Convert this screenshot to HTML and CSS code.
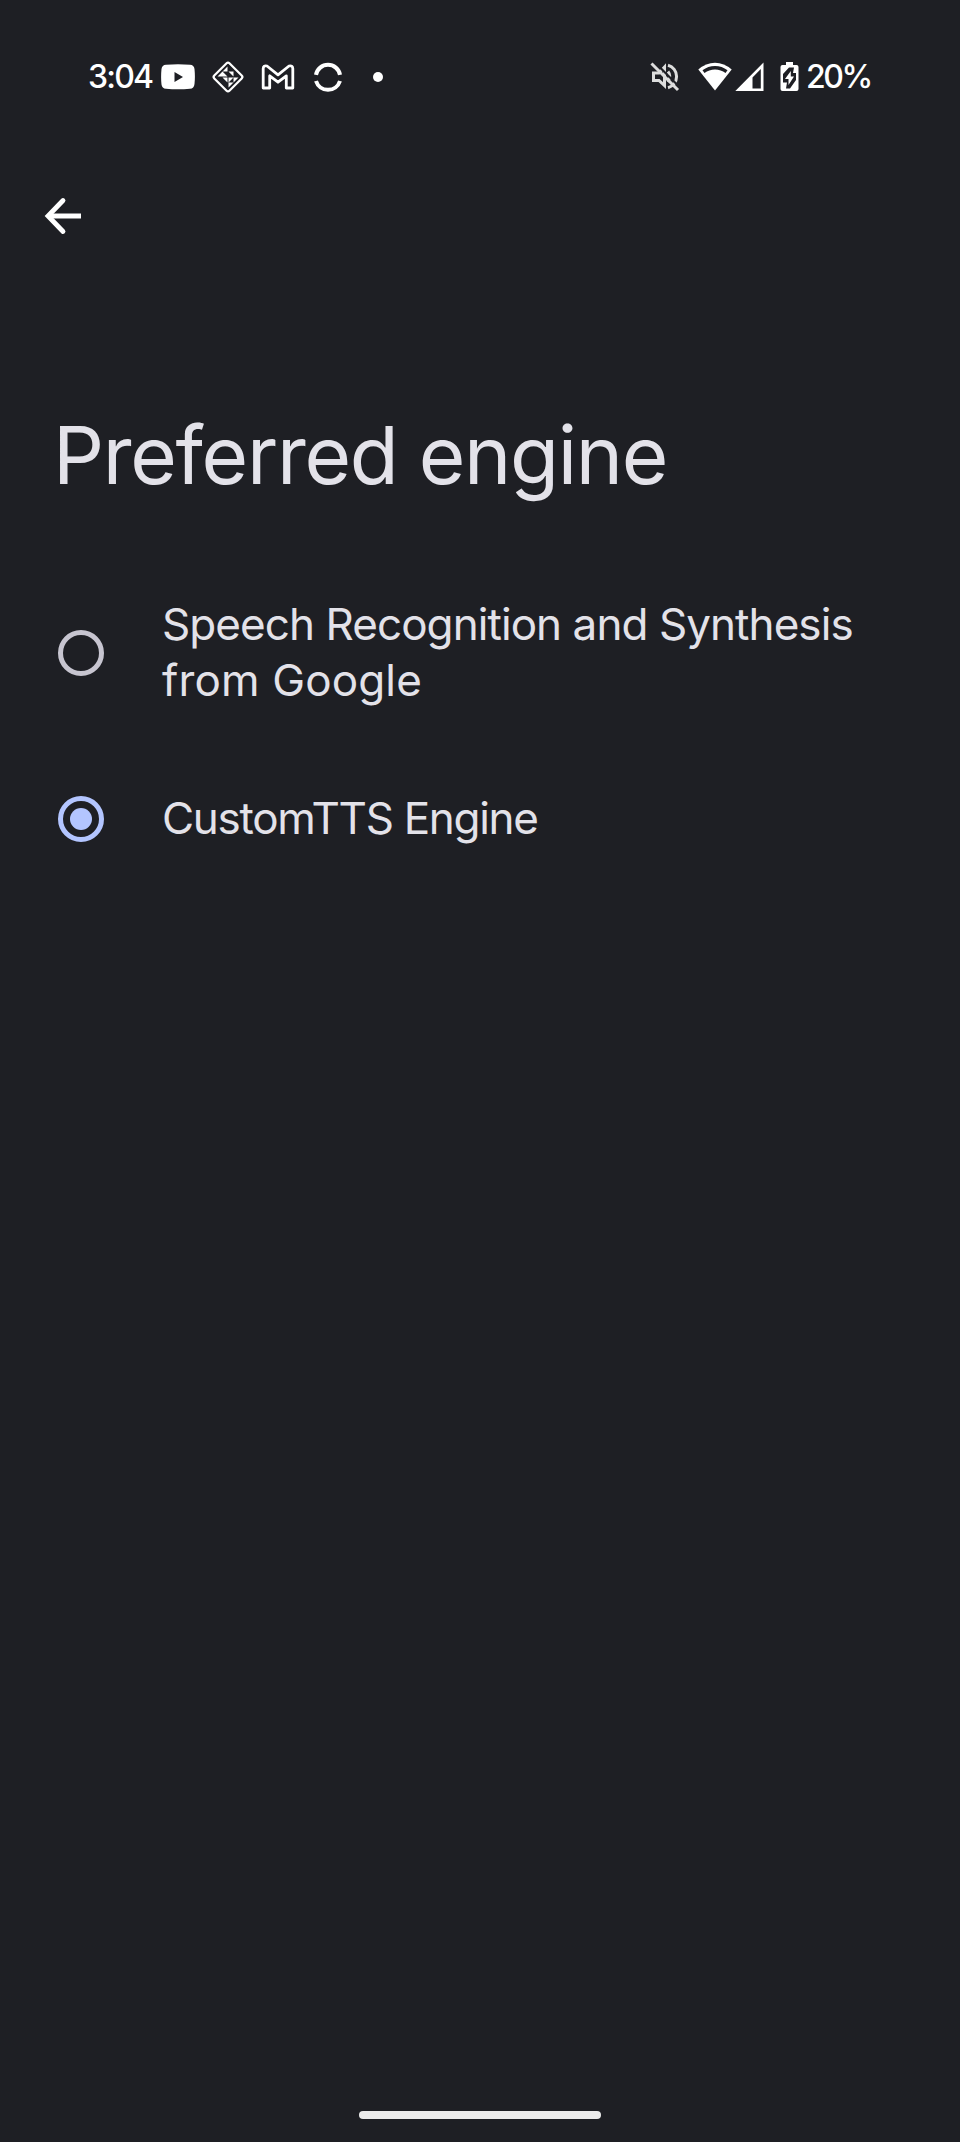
FILE: index.html
```html
<!DOCTYPE html>
<html lang="en">
<head>
<meta charset="utf-8">
<title>Preferred engine</title>
<link rel="stylesheet" href="styles.css">
</head>
<body>
<div class="screen">
  <header class="status">
    <div class="status-left">
      <span class="clock">3:04</span>
      <svg class="icon youtube" width="34" height="26" viewBox="0 0 34 26"><path fill="#fff" fill-rule="evenodd" d="M5 .8Q17-.2 29 .8Q33 1 33.500 5Q34.300 13 33.500 20Q33 24.500 29 24.800Q17 25.800 5 24.800Q1 24.500.5 20.500Q-.3 13 .5 5Q1 1 5 .8ZM13.500 8V18L22 13Z"/></svg>
      <svg class="icon diamond" width="34" height="34" viewBox="-17 -17 34 34"><rect x="-10.700" y="-10.700" width="21.400" height="21.400" rx="2" transform="rotate(45)" fill="none" stroke="#fff" stroke-width="2.200"/><path fill="#fff" d="M-.5-10.500V-5.500H-5.500ZM.5-5.500H5.500V-.5ZM-5.500-5.500V-.5H-.5ZM5.500.5H10.500L5.500 5.500ZM-10.500-.5H-5.500V-5.500ZM-5.500.5H-.5V5.500ZM.5.5H5.500L.5 5.500ZM.5 10.500V5.500H5.500Z"/></svg>
      <svg class="icon gmail" width="34" height="26" viewBox="0 0 34 26"><path fill="none" stroke="#fff" stroke-width="2.800" stroke-linejoin="round" d="M2.200 24V4.500Q2.500 1 6 2L17 10.800L28 2Q31.500 1 31.800 4.500V24H25.300V11.800L17 18.200L8.700 11.800V24Z"/></svg>
      <svg class="icon ring" width="30" height="30" viewBox="-15 -15 30 30"><path fill="none" stroke="#fff" stroke-width="4" d="M-12-2.200A12.200 12.200 0 0 1 12-2.200M-12 4A12.600 12.600 0 0 0 12 4"/></svg>
      <span class="dot"></span>
    </div>
    <div class="status-right">
      <svg class="icon mute" width="30" height="30" viewBox="0 0 30 30"><g fill="none" stroke="#ddd" stroke-width="3"><path d="M3.500 11H9L14.500 5V23.500L9 18.500H3.500Z"/><path d="M18 9.500Q21.500 14 18 20M18 3.300A11.600 11.600 0 0 1 18 25.700"/></g><path stroke="#1e1f24" stroke-width="2.200" d="M4-.5L30 25.500"/><path stroke="#ddd" stroke-width="3" d="M1.500 1.500L28 28"/></svg>
      <svg class="icon wifi" width="34" height="30" viewBox="0 0 34 30"><path fill="#fff" d="M17 .7Q26 .7 33.700 7.500L17 28.500L.3 7.500Q8 .7 17 .7Z"/><path fill="#1e1f24" d="M17 4Q24 4 29.500 8.300L27.500 11Q23 7.500 17 7.500T6.500 11L4.500 8.300Q10 4 17 4Z"/></svg>
      <svg class="icon signal" width="29" height="30" viewBox="0 0 29 30"><path fill="#fff" fill-rule="evenodd" d="M28.500.5V29H.3ZM25.800 7V26.500H17.500V15.500Z"/></svg>
      <svg class="icon battery" width="19" height="30" viewBox="0 0 19 30"><path fill="#fff" d="M6 0H13V3H16.500Q18.500 3 18.500 5V27Q18.500 29 16.500 29H2.500Q.5 29 .5 27V5Q.5 3 2.500 3H6Z"/><path fill="#1e1f24" d="M3 12L9 5.500H14L13 11H16V18L10 26.500H6L7 20.500H3Z"/><path fill="#fff" d="M10.800 9L5 17H8.500V23L14 14.500H10.800Z"/></svg>
      <span class="percent">20%</span>
    </div>
  </header>
  <nav class="toolbar">
    <svg width="40" height="40" viewBox="0 0 40 40"><path fill="none" stroke="#fff" stroke-width="5" d="M38 20H6"/><path fill="none" stroke="#fff" stroke-width="4.800" stroke-linecap="round" d="M20 4.500L5 20L20 35.500"/></svg>
  </nav>
  <h1 class="title">Preferred engine</h1>
  <main class="options">
    <label class="option"><span class="radio"></span><span class="label"><span class="long">Speech Recognition and Synthesis</span><br><span class="short">from Google</span></span></label>
    <label class="option"><span class="radio selected"></span><span class="label custom">CustomTTS Engine</span></label>
  </main>
  <footer class="nav-area"><span class="handle"></span></footer>
</div>
</body>
</html>
```
FILE: styles.css
```css
* { box-sizing: border-box; }
body { margin: 0; background: #1e1f24; }
.screen { width: 960px; height: 2142px; display: flex; flex-direction: column; font-family: Inter, "Open Sans", sans-serif; color: #e3e2e9; }
.status { height: 154px; display: flex; align-items: center; justify-content: space-between; padding: 0 90px 0 88px; color: #fff; }
.status-left, .status-right { display: flex; align-items: center; }
.clock, .percent { font-size: 32px; line-height: 40px; font-weight: 500; white-space: nowrap; }
.clock { width: 73px; letter-spacing: -1.8px; }
.percent { width: 64px; letter-spacing: -2.4px; margin-left: 7px; }
.icon { display: block; flex: none; }
.diamond { margin-left: 16px; }
.gmail { margin-left: 16px; }
.ring { margin-left: 18px; }
.dot { width: 10px; height: 10px; margin-left: 30px; border-radius: 50%; background: #fff; }
.wifi { margin-left: 18px; }
.signal { margin-left: 3px; }
.battery { margin-left: 16px; }
.toolbar { height: 124px; padding: 42px 0 0 43px; }
.title { margin: 0; padding: 127px 0 0 53px; height: 301px; font-size: 80px; line-height: 100px; font-weight: 400; letter-spacing: -1.3px; white-space: nowrap; }
.options { display: flex; flex-direction: column; }
.option { display: flex; align-items: center; height: 148px; padding-left: 58px; }
.option + .option { height: 184px; }
.radio { display: grid; place-items: center; flex: none; width: 46px; height: 46px; border: 5px solid #c7c5d0; border-radius: 50%; }
.selected { border-color: #b3c5ff; }
.selected::before { content: ""; width: 22px; height: 22px; border-radius: 50%; background: #b3c5ff; }
.label { margin-left: 58px; padding-bottom: 2px; font-size: 44px; line-height: 56px; white-space: nowrap; }
.long { letter-spacing: -0.93px; }
.short { letter-spacing: 0.15px; }
.custom { letter-spacing: -1.3px; }
.nav-area { margin-top: auto; height: 31px; display: flex; justify-content: center; }
.handle { width: 242px; height: 8px; border-radius: 4px; background: #ececec; }
```
